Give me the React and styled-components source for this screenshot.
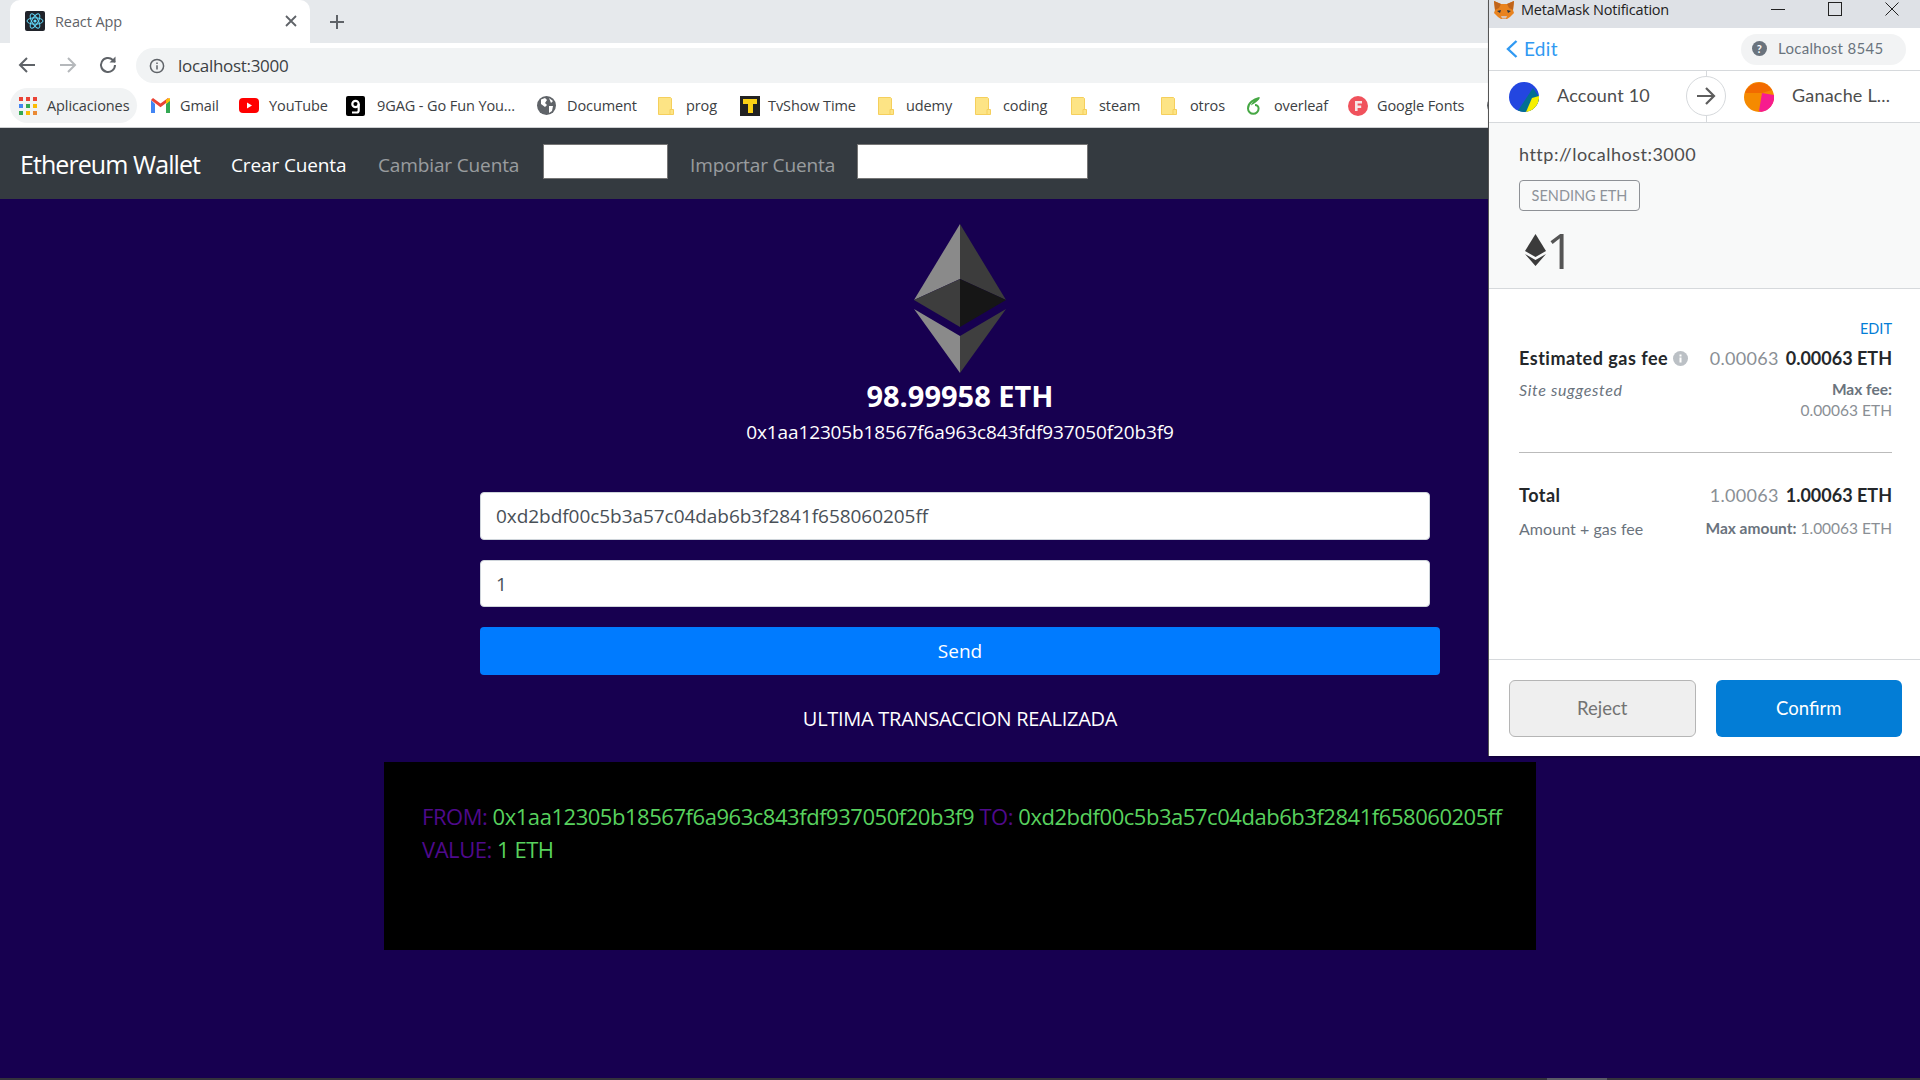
import React from "react";
import styled, { createGlobalStyle } from "styled-components";

const Global = createGlobalStyle`
  html, body { margin: 0; padding: 0; height: 1080px; overflow: hidden; background: #170050; }
  #root { height: 1080px; }
  * { box-sizing: border-box; }
`;
const UI = `"Open Sans", "Noto Sans", sans-serif`;
const MM = `Lato, "Noto Sans", sans-serif`;

const Page = styled.div`position: relative; width: 1920px; height: 1080px; overflow: hidden; display: flex; flex-direction: column; font-family: ${UI}; background: #170050;`;
const TabStrip = styled.div`height: 43px; background: #e6e9ec; display: flex; align-items: stretch; padding-left: 10px; flex: none;`;
const Tab = styled.div`width: 300px; background: #fff; border-radius: 10px 10px 0 0; display: flex; align-items: center; padding: 0 12px 1px 15px; gap: 10px; color: #5f6368; font-size: 14.5px; letter-spacing: -.1px;`;
const TabTitle = styled.span`flex: 1;`;
const NewTab = styled.div`width: 54px; display: flex; align-items: center; justify-content: center; color: #5f6368;`;
const Toolbar = styled.div`height: 45px; background: #fff; display: flex; align-items: flex-start; padding: 5px 0 0 15px; flex: none;`;
const NavIcon = styled.div`width: 40px; margin: 5px ${p => p.$mr || 0}px 0 0; height: 24px; display: flex; justify-content: flex-start; color: ${p => p.$c};`;
const Address = styled.div`flex: 1; height: 35px; border-radius: 18px 0 0 18px; background: #f1f3f4; display: flex; align-items: center; padding-left: 13px; gap: 13px; color: #3c4043; font-size: 17px; letter-spacing: -.3px;`;
const BookmarkBar = styled.div`height: 40px; background: #fff; border-bottom: 1px solid #ced0d2; display: flex; align-items: flex-start; padding: 0 0 0 10px; flex: none;`;
const Bookmark = styled.div`height: 35px; width: ${p => p.$w}px; flex: none; display: flex; align-items: center; padding-left: ${p => p.$pl}px; gap: ${p => p.$g ?? 10}px; color: #3c4043; font-size: 14.5px; letter-spacing: -.1px; white-space: nowrap; border-radius: 18px; background: ${p => p.$active ? "#f1f3f4" : "transparent"};`;
const Navbar = styled.nav`height: 71px; background: #343a40; display: flex; align-items: center; padding: 0 0 0 20px; flex: none;`;
const Brand = styled.div`width: 211px; color: #fff; font-size: 25px; letter-spacing: -.93px; white-space: nowrap;`;
const NavLink = styled.div`width: ${p => p.$w}px; flex: none; color: ${p => p.$on ? "#fff" : "rgba(255,255,255,.5)"}; font-size: 19px; letter-spacing: -.13px; white-space: nowrap; padding-top: 2px;`;
const NavInput = styled.input`width: ${p => p.$w}px; height: 35px; flex: none; border: 1px solid #757575; background: #fff; margin: -4px ${p => p.$mr || 0}px 0 0; padding: 0; outline: 0;`;
const Main = styled.main`flex: 1; display: flex; flex-direction: column; align-items: center; padding-top: 25px; color: #fff;`;
const Logo = styled.svg`display: block; flex: none;`;
const Balance = styled.div`font-size: 29px; font-weight: 700; line-height: 38px; margin-top: 4px;`;
const WalletAddress = styled.div`font-size: 19px; line-height: 24px; margin-top: 5px; letter-spacing: -.12px;`;
const Form = styled.form`width: 960px; margin: 0; padding-top: 48px; display: flex; flex-direction: column;`;
const Field = styled.input`width: 950px; height: ${p => p.$h}px; margin-bottom: ${p => p.$mb}px; border: 1px solid #ced4da; border-radius: 4px; background: #fff; color: #495057; padding: 0 15px; font: 19px ${UI}; letter-spacing: -.05px; outline: 0;`;
const Send = styled.button`height: 48px; border: 0; border-radius: 4px; background: #007bff; color: #fff; font: 19px ${UI}; padding: 0;`;
const Caption = styled.div`margin-top: 31px; font-size: 20px; line-height: 26px; letter-spacing: -.28px;`;
const TxBox = styled.div`width: 1152px; height: 188px; margin-top: 30px; background: #000; padding: 38px 0 0 38px; font-size: 22px; font-weight: 400; line-height: 33px; letter-spacing: -.46px; color: #58d25e;`;
const TxLine = styled.div`white-space: nowrap;`;
const TxLabel = styled.span`color: #4f0a8c;`;
const Scroll = styled.div`height: 2px; background: #33323c; flex: none; padding-left: 1547px;`;
const Thumb = styled.div`width: 60px; height: 2px; background: #5a5a66;`;

const Popup = styled.aside`position: absolute; left: 1489px; top: 0; width: 431px; height: 756px; background: #fff; display: flex; flex-direction: column; font-family: ${MM}; box-shadow: -1px 0 0 #555, 0 1px 2px rgba(0,0,0,.4);`;
const TitleBar = styled.div`height: 28px; background: #dee1e6; display: flex; align-items: center; padding-left: 5px; font: 14.5px ${UI}; letter-spacing: -.2px; color: #222; flex: none;`;
const TitleText = styled.span`flex: 1; margin: -9px 0 0 7px;`;
const WinBtn = styled.div`width: 57px; height: 28px; display: flex; justify-content: center; padding-top: 2px; flex: none;`;
const PopHeader = styled.div`height: 43px; display: flex; align-items: center; justify-content: space-between; padding: 0 14px 0 17px; border-bottom: 1px solid #d6d9dc; flex: none;`;
const Back = styled.div`display: flex; align-items: center; gap: 6px; color: #3099f2; font-size: 19px; letter-spacing: .3px; margin-top: -1px;`;
const Network = styled.div`width: 165px; height: 31px; border-radius: 16px; background: #f2f3f4; display: flex; align-items: center; padding: 0 0 2px 11px; gap: 11px; color: #6a737d; font-size: 15px; letter-spacing: .3px;`;
const Parties = styled.div`position: relative; height: 52px; display: flex; align-items: center; padding-left: 20px; border-bottom: 1px solid #d6d9dc; flex: none;`;
const Party = styled.div`display: flex; align-items: center; gap: 18px; width: ${p => p.$w}px; color: #4d4d4d; font-size: 18px; letter-spacing: .2px; white-space: nowrap; flex: none;`;
const PartyName = styled.span`margin-top: -3px;`;
const ArrowCircle = styled.div`width: 40px; height: 40px; margin: -1px 18px 0 0; border-radius: 50%; border: 1px solid #d6d9dc; background: #fff; display: flex; align-items: center; justify-content: center; color: #5d5d5d; position: relative; z-index: 1; flex: none;`;
const Divider = styled.div`position: absolute; left: 217px; top: 0; bottom: 0; width: 1px; background: #d6d9dc;`;
const Summary = styled.div`height: 166px; background: #f8f9f9; border-bottom: 1px solid #d6d9dc; padding: 19px 0 0 30px; flex: none;`;
const Origin = styled.div`font-size: 18px; line-height: 24px; color: #4d4d4d; letter-spacing: .5px;`;
const Chip = styled.div`width: 121px; height: 31px; margin-top: 14px; border: 1px solid #8e9196; border-radius: 4px; display: flex; align-items: center; justify-content: center; color: #8e939a; font-size: 14.5px;`;
const Amount = styled.div`display: flex; align-items: center; height: 40px; margin-top: 19px; padding-left: 6px; gap: 0; color: #555; font-family: ${UI}; font-size: 50px; font-weight: 400; letter-spacing: -2px;`;
const Details = styled.div`flex: 1; padding: 31px 28px 0 30px;`;
const EditLink = styled.div`text-align: right; color: #037dd6; font-size: 14.5px; line-height: 18px;`;
const Row = styled.div`display: flex; justify-content: space-between; align-items: ${p => p.$top ? "flex-start" : "center"}; margin-top: ${p => p.$mt || 0}px;`;
const Strong = styled.div`display: flex; align-items: center; gap: 5px; color: #24272a; font-size: 18px; font-weight: 700; line-height: 24px; letter-spacing: .5px;`;
const Values = styled.div`color: #24272a; font-size: 18px; font-weight: 700; line-height: 24px; white-space: nowrap;`;
const Faint = styled.span`color: #8a8f95; font-weight: 400; margin-right: 7px; letter-spacing: .3px;`;
const Note = styled.div`color: #6a737d; font-size: 16px; line-height: 21px; letter-spacing: ${p => p.$it ? ".65px" : ".05px"}; font-style: ${p => p.$it ? "italic" : "normal"};`;
const NoteRight = styled.div`color: #8a8f95; font-size: 15.5px; line-height: 21px; text-align: right; white-space: nowrap;`;
const NoteBold = styled.span`color: #6a737d; font-weight: 700;`;
const Rule = styled.div`height: 1px; background: #bbbbbb; margin-top: 31px;`;
const PopFooter = styled.div`height: 97px; border-top: 1px solid #d6d9dc; display: flex; padding: 20px 18px 0 20px; gap: 20px; flex: none;`;
const Btn = styled.div`width: 187px; height: 57px; padding-bottom: 2px; border-radius: 6px; display: flex; align-items: center; justify-content: center; font-size: 18.5px; ${p => p.$primary ? "background:#037dd6;color:#fff;" : "background:#efefef;color:#737373;border:1px solid #b5b5b5;"}`;

const ReactIcon = () => (
  <svg width="20" height="20" viewBox="0 0 20 20"><rect width="20" height="20" rx="2" fill="#20232a" /><g fill="none" stroke="#61dafb" strokeWidth="1"><ellipse cx="10" cy="10" rx="8" ry="3.2" /><ellipse cx="10" cy="10" rx="8" ry="3.2" transform="rotate(60 10 10)" /><ellipse cx="10" cy="10" rx="8" ry="3.2" transform="rotate(120 10 10)" /></g><circle cx="10" cy="10" r="1.6" fill="#61dafb" /></svg>
);
const Folder = () => (
  <svg width="16" height="18" viewBox="0 0 16 18" style={{ flex: "none" }}><path d="M.5.5h12l1 1v16H.5z" fill="#fde485" stroke="#f5cf5c" /><path d="M12 12.5h3.5v5H12z" fill="#fde485" stroke="#f5cf5c" /></svg>
);
const Apps = () => (
  <svg width="18" height="18" viewBox="0 0 18 18">{[["#ea4335", "#ea4335", "#ea4335"], ["#4285f4", "#34a853", "#fbbc05"], ["#34a853", "#fbbc05", "#ea8a35"]].map((r, y) => r.map((c, x) => <rect key={x + "" + y} x={x * 7} y={y * 7} width="4" height="4" fill={c} />))}</svg>
);
const Gmail = () => (
  <svg width="19" height="15" viewBox="0 0 19 15"><path d="M0 2v13h4V6z" fill="#4285f4" /><path d="M15 6v9h4V2z" fill="#34a853" /><path d="M0 2 2 0l7.5 5.6L17 0l2 2-9.5 7.2z" fill="#ea4335" /><path d="M15 1.5 19 0v3l-4 3z" fill="#fbbc05" /></svg>
);
const YouTube = () => (
  <svg width="20" height="15" viewBox="0 0 20 15"><rect width="20" height="15" rx="4" fill="#f00" /><path d="M8 4.5v6l5-3z" fill="#fff" /></svg>
);
const Nine = () => (
  <svg width="19" height="20" viewBox="0 0 19 20"><rect width="19" height="20" rx="2" fill="#000" /><circle cx="9.5" cy="8" r="3.2" fill="none" stroke="#fff" strokeWidth="2.2" /><path d="M12.7 8v6.5a2 2 0 0 1-2 2H6" fill="none" stroke="#fff" strokeWidth="2.2" /></svg>
);
const Globe = () => (
  <svg width="19" height="19" viewBox="0 0 19 19"><circle cx="9.5" cy="9.5" r="9.5" fill="#5f6368" /><path d="M4 3.5 8 2l2 2-2 3 2 2-2 2-4-3zM12 10l4 0-1 5-3 2zM12 2l4 3-2 2z" fill="#fff" /></svg>
);
const Tv = () => (
  <svg width="20" height="20" viewBox="0 0 20 20"><rect width="20" height="20" fill="#222" /><path d="M3 3h14v5h-4v9H8V8H3z" fill="#fbd116" /></svg>
);
const Leaf = () => (
  <svg width="15" height="18" viewBox="0 0 15 18"><path d="M13 1C8 2 2 6 2 11.5a5.3 5.3 0 0 0 10.6 0c0-2-1.6-3.5-3.6-3.5" fill="none" stroke="#47a845" strokeWidth="2" /><path d="M14 0C13 4 9 6 5 8.5 6 4.5 10 1.5 14 0z" fill="#47a845" /></svg>
);
const GFonts = () => (
  <svg width="20" height="20" viewBox="0 0 20 20"><circle cx="10" cy="10" r="10" fill="#f0525c" /><path d="M7 5h7v2.4H9.6v2.2h3.6V12H9.6v3H7z" fill="#f6e6e6" /></svg>
);
const Info = () => (
  <svg width="16" height="16" viewBox="0 0 16 16" fill="none" stroke="#5f6368" strokeWidth="1.5"><circle cx="8" cy="8" r="6.6" /><path d="M8 7.2v4.2M8 4.4v1.5" /></svg>
);
const Fox = () => (
  <svg width="20" height="18" viewBox="0 0 20 18" style={{ marginTop: -9 }}><path d="M0 0l7 3h6l7-3-1 9 1 3-4 4-3 2H7l-3-2-4-4 1-3z" fill="#e8821e" /><path d="M3 10l4-1-1 3zM17 10l-4-1 1 3z" fill="#233447" /><path d="M7 15h6l-1 2.5H8z" fill="#d7c1b3" /><path d="M0 0l7 3-2 4-4 2z" fill="#c0641a" /><path d="M20 0l-7 3 2 4 4 2z" fill="#c0641a" /></svg>
);
const EthMark = ({ big }) => big ? (
  <Logo width="92" height="149" viewBox="0 0 92 149">
    <path d="M46 0v55L0 76z" fill="#8a8a8a" />
    <path d="M46 0v55l46 21z" fill="#3c3c3c" />
    <path d="M46 55 0 76l46 27z" fill="#3d3d3d" />
    <path d="M46 55l46 21-46 27z" fill="#161616" />
    <path d="M0 85l46 27v37z" fill="#8a8a8a" />
    <path d="M92 85l-46 27v37z" fill="#3f3f3f" />
  </Logo>
) : (
  <svg width="21" height="32" viewBox="0 0 21 32" style={{ flex: "none" }}><path d="M10.5 0 21 17l-10.5 6L0 17z" fill="#3b3b3b" /><path d="M0 20l10.5 6L21 20 10.5 32z" fill="#3b3b3b" /></svg>
);

const bookmarks = [
  { icon: <Apps />, label: "Aplicaciones", w: 127, pl: 9, active: true },
  { icon: <Gmail />, label: "Gmail", w: 102, pl: 14 },
  { icon: <YouTube />, label: "YouTube", w: 107, pl: 0 },
  { icon: <Nine />, label: "9GAG - Go Fun You...", w: 191, pl: 0, g: 12 },
  { icon: <Globe />, label: "Document", w: 121, pl: 0, g: 11 },
  { icon: <Folder />, label: "prog", w: 82, pl: 0, g: 12 },
  { icon: <Tv />, label: "TvShow Time", w: 138, pl: 0, g: 8 },
  { icon: <Folder />, label: "udemy", w: 97, pl: 0, g: 12 },
  { icon: <Folder />, label: "coding", w: 96, pl: 0, g: 12 },
  { icon: <Folder />, label: "steam", w: 90, pl: 0, g: 12 },
  { icon: <Folder />, label: "otros", w: 85, pl: 0, g: 13 },
  { icon: <Leaf />, label: "overleaf", w: 102, pl: 0, g: 13 },
  { icon: <GFonts />, label: "Google Fonts", w: 139, pl: 0, g: 9 },
  { icon: <Globe />, label: "", w: 30, pl: 0 },
];

export default function App() {
  return (
    <Page>
      <Global />
      <TabStrip>
        <Tab>
          <ReactIcon />
          <TabTitle>React App</TabTitle>
          <svg width="14" height="14" viewBox="0 0 14 14" stroke="#5f6368" strokeWidth="1.8"><path d="M2 2l10 10M12 2 2 12" /></svg>
        </Tab>
        <NewTab>
          <svg width="16" height="16" viewBox="0 0 16 16" stroke="#5f6368" strokeWidth="2"><path d="M8 1v14M1 8h14" /></svg>
        </NewTab>
      </TabStrip>
      <Toolbar>
        <NavIcon $c="#5f6368" $mr={1}><svg width="24" height="24" viewBox="0 0 24 24" fill="none" stroke="currentColor" strokeWidth="2"><path d="M20 12H5M12 5l-7 7 7 7" /></svg></NavIcon>
        <NavIcon $c="#b5b8bb"><svg width="24" height="24" viewBox="0 0 24 24" fill="none" stroke="currentColor" strokeWidth="2"><path d="M4 12h15M12 5l7 7-7 7" /></svg></NavIcon>
        <NavIcon $c="#5f6368"><svg width="24" height="24" viewBox="0 0 24 24" fill="none" stroke="currentColor" strokeWidth="2"><path d="M19 12a7 7 0 1 1-2.2-5.1L19 9" /><path d="M19.5 3.5V9.5H13.5" fill="currentColor" stroke="none" /></svg></NavIcon>
        <Address><Info />localhost:3000</Address>
      </Toolbar>
      <BookmarkBar>
        {bookmarks.map((b, i) => (
          <Bookmark key={i} $w={b.w} $pl={b.pl} $g={b.g} $active={b.active}>{b.icon}{b.label}</Bookmark>
        ))}
      </BookmarkBar>
      <Navbar>
        <Brand>Ethereum Wallet</Brand>
        <NavLink $on $w={147}>Crear Cuenta</NavLink>
        <NavLink $w={165}>Cambiar Cuenta</NavLink>
        <NavInput $w={125} $mr={22} readOnly />
        <NavLink $w={167}>Importar Cuenta</NavLink>
        <NavInput $w={231} readOnly />
      </Navbar>
      <Main>
        <EthMark big />
        <Balance>98.99958 ETH</Balance>
        <WalletAddress>0x1aa12305b18567f6a963c843fdf937050f20b3f9</WalletAddress>
        <Form>
          <Field $h={48} $mb={20} readOnly value="0xd2bdf00c5b3a57c04dab6b3f2841f658060205ff" />
          <Field $h={47} $mb={20} readOnly value="1" />
          <Send type="button">Send</Send>
        </Form>
        <Caption>ULTIMA TRANSACCION REALIZADA</Caption>
        <TxBox>
          <TxLine><TxLabel>FROM:</TxLabel> 0x1aa12305b18567f6a963c843fdf937050f20b3f9 <TxLabel>TO:</TxLabel> 0xd2bdf00c5b3a57c04dab6b3f2841f658060205ff</TxLine>
          <TxLine><TxLabel>VALUE:</TxLabel> 1 ETH</TxLine>
        </TxBox>
      </Main>
      <Scroll><Thumb /></Scroll>
      <Popup>
        <TitleBar>
          <Fox />
          <TitleText>MetaMask Notification</TitleText>
          <WinBtn><svg width="14" height="14" viewBox="0 0 14 14" stroke="#222" strokeWidth="1"><path d="M0 7.5h14" /></svg></WinBtn>
          <WinBtn><svg width="14" height="14" viewBox="0 0 14 14" fill="none" stroke="#222" strokeWidth="1"><rect x=".5" y=".5" width="13" height="13" /></svg></WinBtn>
          <WinBtn><svg width="14" height="14" viewBox="0 0 14 14" stroke="#222" strokeWidth="1"><path d="M.5.5l13 13M13.5.5l-13 13" /></svg></WinBtn>
        </TitleBar>
        <PopHeader>
          <Back>
            <svg width="12" height="18" viewBox="0 0 12 18" fill="none" stroke="#3099f2" strokeWidth="2.4"><path d="M10.5 1 2 9l8.5 8" /></svg>
            Edit
          </Back>
          <Network>
            <svg width="15" height="15" viewBox="0 0 15 15"><circle cx="7.5" cy="7.5" r="7.5" fill="#6a737d" /><text x="7.5" y="11.5" textAnchor="middle" fill="#fff" fontSize="11" fontWeight="700">?</text></svg>
            Localhost 8545
          </Network>
        </PopHeader>
        <Parties>
          <Divider />
          <Party $w={177}>
            <svg width="30" height="30" viewBox="0 0 30 30" style={{ flex: "none" }}><circle cx="15" cy="15" r="15" fill="#2346e0" /><path d="M24 6l6 9a15 15 0 0 1-15 15 15 15 0 0 1-6-1.5z" fill="#036f93" /><path d="M30 14l-7 2-6 14a15 15 0 0 0 13-16z" fill="#f6f000" /></svg>
            <PartyName>Account 10</PartyName>
          </Party>
          <ArrowCircle>
            <svg width="20" height="20" viewBox="0 0 20 20" fill="none" stroke="currentColor" strokeWidth="2.2"><path d="M1 10h17M10 2l8 8-8 8" /></svg>
          </ArrowCircle>
          <Party $w={170}>
            <svg width="30" height="30" viewBox="0 0 30 30" style={{ flex: "none" }}><circle cx="15" cy="15" r="15" fill="#f58a00" /><path d="M1 11A15 15 0 0 1 28 8l-10 3z" fill="#f26a00" /><path d="M18 11l12 2a15 15 0 0 1-13 17l-2-1z" fill="#f71c8e" /></svg>
            <PartyName>Ganache L...</PartyName>
          </Party>
        </Parties>
        <Summary>
          <Origin>http://localhost:3000</Origin>
          <Chip>SENDING ETH</Chip>
          <Amount><EthMark />1</Amount>
        </Summary>
        <Details>
          <EditLink>EDIT</EditLink>
          <Row $mt={8}>
            <Strong>Estimated gas fee
              <svg width="15" height="15" viewBox="0 0 15 15"><circle cx="7.5" cy="7.5" r="7.5" fill="#bbc0c5" /><path d="M6.5 6.5h2v5h-2zM6.5 3.5h2v2h-2z" fill="#fff" /></svg>
            </Strong>
            <Values><Faint>0.00063</Faint>0.00063 ETH</Values>
          </Row>
          <Row $top $mt={9}>
            <Note $it>Site suggested</Note>
            <NoteRight><NoteBold>Max fee:</NoteBold><br />0.00063 ETH</NoteRight>
          </Row>
          <Rule />
          <Row $mt={30}>
            <Strong>Total</Strong>
            <Values><Faint>1.00063</Faint>1.00063 ETH</Values>
          </Row>
          <Row $mt={11}>
            <Note>Amount + gas fee</Note>
            <NoteRight><NoteBold>Max amount:</NoteBold> 1.00063 ETH</NoteRight>
          </Row>
        </Details>
        <PopFooter>
          <Btn>Reject</Btn>
          <Btn $primary>Confirm</Btn>
        </PopFooter>
      </Popup>
    </Page>
  );
}
